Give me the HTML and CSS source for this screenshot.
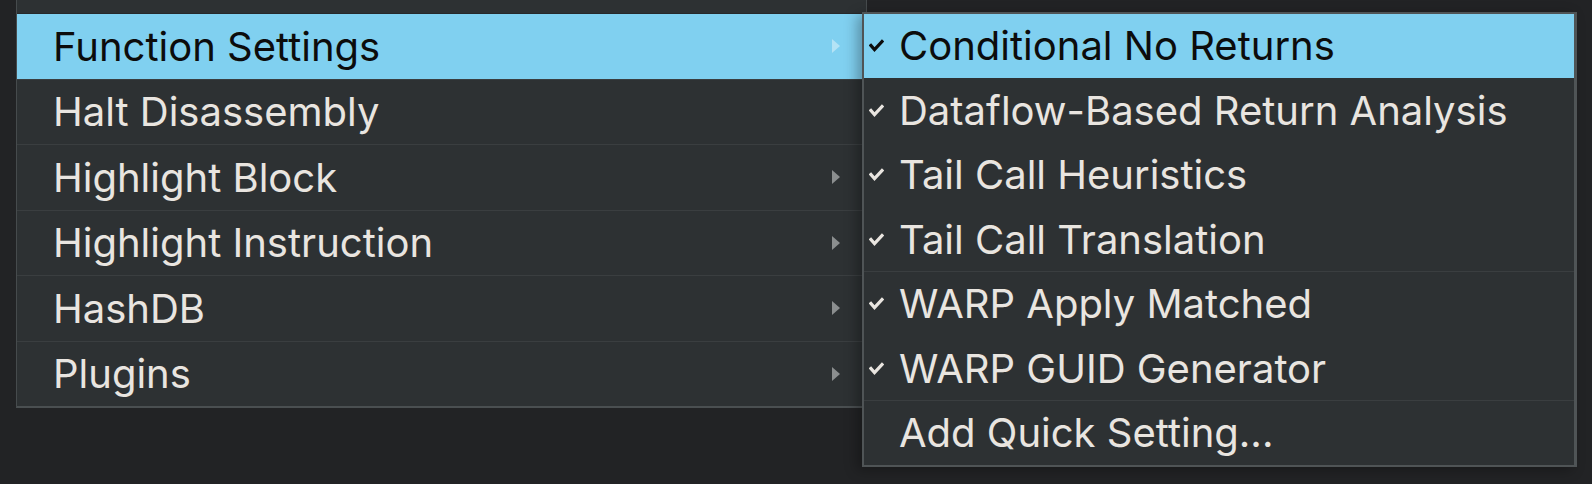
FILE: index.html
```html
<!DOCTYPE html>
<html>
<head>
<meta charset="utf-8">
<link rel="stylesheet" href="styles.css">
</head>
<body>
<div class="screen">
  <div class="menu main">
    <div class="item partial"></div>
    <div class="item active"><span class="label">Function Settings</span><span class="arrow"></span></div>
    <div class="item"><span class="label">Halt Disassembly</span></div>
    <div class="item"><span class="label">Highlight Block</span><span class="arrow"></span></div>
    <div class="item"><span class="label">Highlight Instruction</span><span class="arrow"></span></div>
    <div class="item"><span class="label">HashDB</span><span class="arrow"></span></div>
    <div class="item last"><span class="label">Plugins</span><span class="arrow"></span></div>
  </div>
  <div class="menu sub">
    <div class="item active quiet"><span class="check"><svg viewBox="0 0 15 13"><path d="M2 6.5 L5.5 10.5 L13 2.5"/></svg></span><span class="label">Conditional No Returns</span></div>
    <div class="item quiet"><span class="check"><svg viewBox="0 0 15 13"><path d="M2 6.5 L5.5 10.5 L13 2.5"/></svg></span><span class="label">Dataflow-Based Return Analysis</span></div>
    <div class="item quiet"><span class="check"><svg viewBox="0 0 15 13"><path d="M2 6.5 L5.5 10.5 L13 2.5"/></svg></span><span class="label">Tail Call Heuristics</span></div>
    <div class="item"><span class="check"><svg viewBox="0 0 15 13"><path d="M2 6.5 L5.5 10.5 L13 2.5"/></svg></span><span class="label">Tail Call Translation</span></div>
    <div class="item quiet"><span class="check"><svg viewBox="0 0 15 13"><path d="M2 6.5 L5.5 10.5 L13 2.5"/></svg></span><span class="label">WARP Apply Matched</span></div>
    <div class="item"><span class="check"><svg viewBox="0 0 15 13"><path d="M2 6.5 L5.5 10.5 L13 2.5"/></svg></span><span class="label">WARP GUID Generator</span></div>
    <div class="item last"><span class="check"></span><span class="label">Add Quick Setting...</span></div>
  </div>
</div>
</body>
</html>
```

FILE: styles.css
```css
html, body {
  margin: 0;
  padding: 0;
  background: #222325;
}

.screen {
  position: relative;
  width: 1592px;
  height: 484px;
  overflow: hidden;
  background: #222325;
  font-family: Inter, "Noto Sans", sans-serif;
  font-size: 40px;
  color: #e9e5e0;
}

.menu {
  background: #2d3133;
  box-sizing: border-box;
}

.main {
  margin-left: 16px;
  width: 851px;
  border-left: 1px solid #464b4d;
  border-right: 1px solid #464b4d;
  border-bottom: 2px solid #4a4f51;
}

.item {
  display: flex;
  align-items: center;
  height: 64.5px;
  border-bottom: 1px solid #3a3e40;
}

.item.last {
  border-bottom: none;
}

.main .label {
  padding-left: 36px;
  flex: 1;
  white-space: nowrap;
}

.partial {
  margin-top: -51.5px;
  border-bottom-color: #26292b;
}

.active {
  background: #80d0f0;
  color: #0c0c0c;
}

.arrow {
  width: 0;
  height: 0;
  border-top: 7px solid transparent;
  border-bottom: 7px solid transparent;
  border-left: 8px solid #8b8e8f;
  margin-right: 26px;
}

.active .arrow {
  border-left-color: #b4e3f5;
}

.sub {
  position: absolute;
  left: 862px;
  top: 12px;
  width: 715px;
  border: 2px solid #4f5456;
  border-right-width: 3px;
  box-shadow: -5px 3px 12px rgba(0, 0, 0, 0.3);
}

.sub .item {
  height: 63.5px;
}

.sub .item.quiet {
  border-bottom-color: #2d3133;
}

.check {
  width: 15px;
  height: 13px;
  margin-left: 5px;
  margin-right: 15px;
  display: flex;
}

.check svg {
  width: 15px;
  height: 13px;
  fill: none;
  stroke: #e9e5e0;
  stroke-width: 3.2;
  stroke-linecap: square;
  stroke-linejoin: miter;
}

.active .check svg {
  stroke: #0c0c0c;
}

.sub .label {
  white-space: nowrap;
}
```
